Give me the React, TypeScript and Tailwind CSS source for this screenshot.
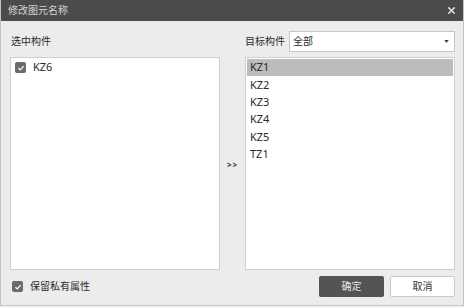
import { FiX } from "react-icons/fi";

const targets = ["KZ1", "KZ2", "KZ3", "KZ4", "KZ5", "TZ1"];

function CheckBox() {
  return (
    <span className="flex h-[11px] w-[11px] items-center justify-center rounded-[2px] bg-[#6b6b6b]">
      <svg viewBox="0 0 10 10" className="h-[8px] w-[8px]" fill="none">
        <path d="M1.8 5.2 L4 7.3 L8.3 2.7" stroke="#ffffff" strokeWidth="1.6" />
      </svg>
    </span>
  );
}

export default function App() {
  return (
    <div
      className="h-[308px] w-[464px] overflow-hidden bg-[#f4f4f4] text-[11px] text-[#2b2b2b]"
      style={{ fontFamily: '"Noto Sans", "Noto Sans CJK SC", sans-serif' }}
    >
      <div className="flex h-[306px] flex-col border-x border-b border-[#c4c4c4] bg-[#ececec]">
        {/* title bar */}
        <div className="flex h-[21px] shrink-0 items-center justify-between bg-[#4b4b4b] pl-[7px] pr-[6px]">
          <span className="text-[10px] text-[#d4d4d4]">修改图元名称</span>
          <FiX className="h-[11px] w-[11px] text-[#e8e8e8]" strokeWidth={3} />
        </div>

        <div className="flex flex-col pl-[9px] pr-[8px]">
          {/* labels row */}
          <div className="mt-[10px] flex h-[21px] items-center justify-between">
            <span className="pl-[1px] text-[10px]">选中构件</span>
            <div className="flex items-center gap-[4px]">
              <span className="text-[10px]">目标构件</span>
              <div className="flex h-[21px] w-[166px] items-center justify-between border border-[#c6c6c6] bg-white pl-[3px] pr-[5px]">
                <span className="text-[10px]">全部</span>
                <svg viewBox="0 0 6 4" className="h-[3px] w-[5px]">
                  <path d="M0 0 L6 0 L3 4 Z" fill="#444" />
                </svg>
              </div>
            </div>
          </div>

          {/* lists */}
          <div className="mt-[5px] flex h-[213px]">
            <div className="w-[210px] border border-[#cfcfcf] bg-white p-[1px]">
              <div className="flex h-[17px] items-center gap-[7px] pl-[3px]">
                <CheckBox />
                <span>KZ6</span>
              </div>
            </div>
            <div className="flex w-[25px] items-center justify-center pt-[2px]">
              <span className="text-[8px] font-bold tracking-[1px] text-[#333]">&gt;&gt;</span>
            </div>
            <div className="flex-1 border border-[#cfcfcf] bg-white p-[1px]">
              {targets.map((t, i) => (
                <div
                  key={t}
                  className={`flex h-[17.3px] items-center pl-[3px] ${i === 0 ? "bg-[#bcbcbc]" : ""}`}
                >
                  {t}
                </div>
              ))}
            </div>
          </div>

          {/* bottom row */}
          <div className="mt-[6px] flex h-[21px] items-center">
            <div className="flex items-center gap-[7px] pl-[2px]">
              <CheckBox />
              <span className="text-[10px]">保留私有属性</span>
            </div>
            <div className="ml-auto flex gap-[6px]">
              <button className="h-[21px] w-[65px] rounded-[2px] bg-[#545454] text-[10px] text-[#e6e6e6]">
                确定
              </button>
              <button className="h-[21px] w-[65px] rounded-[2px] border border-[#c8c8c8] bg-white text-[10px] text-[#333]">
                取消
              </button>
            </div>
          </div>
        </div>
      </div>
    </div>
  );
}
